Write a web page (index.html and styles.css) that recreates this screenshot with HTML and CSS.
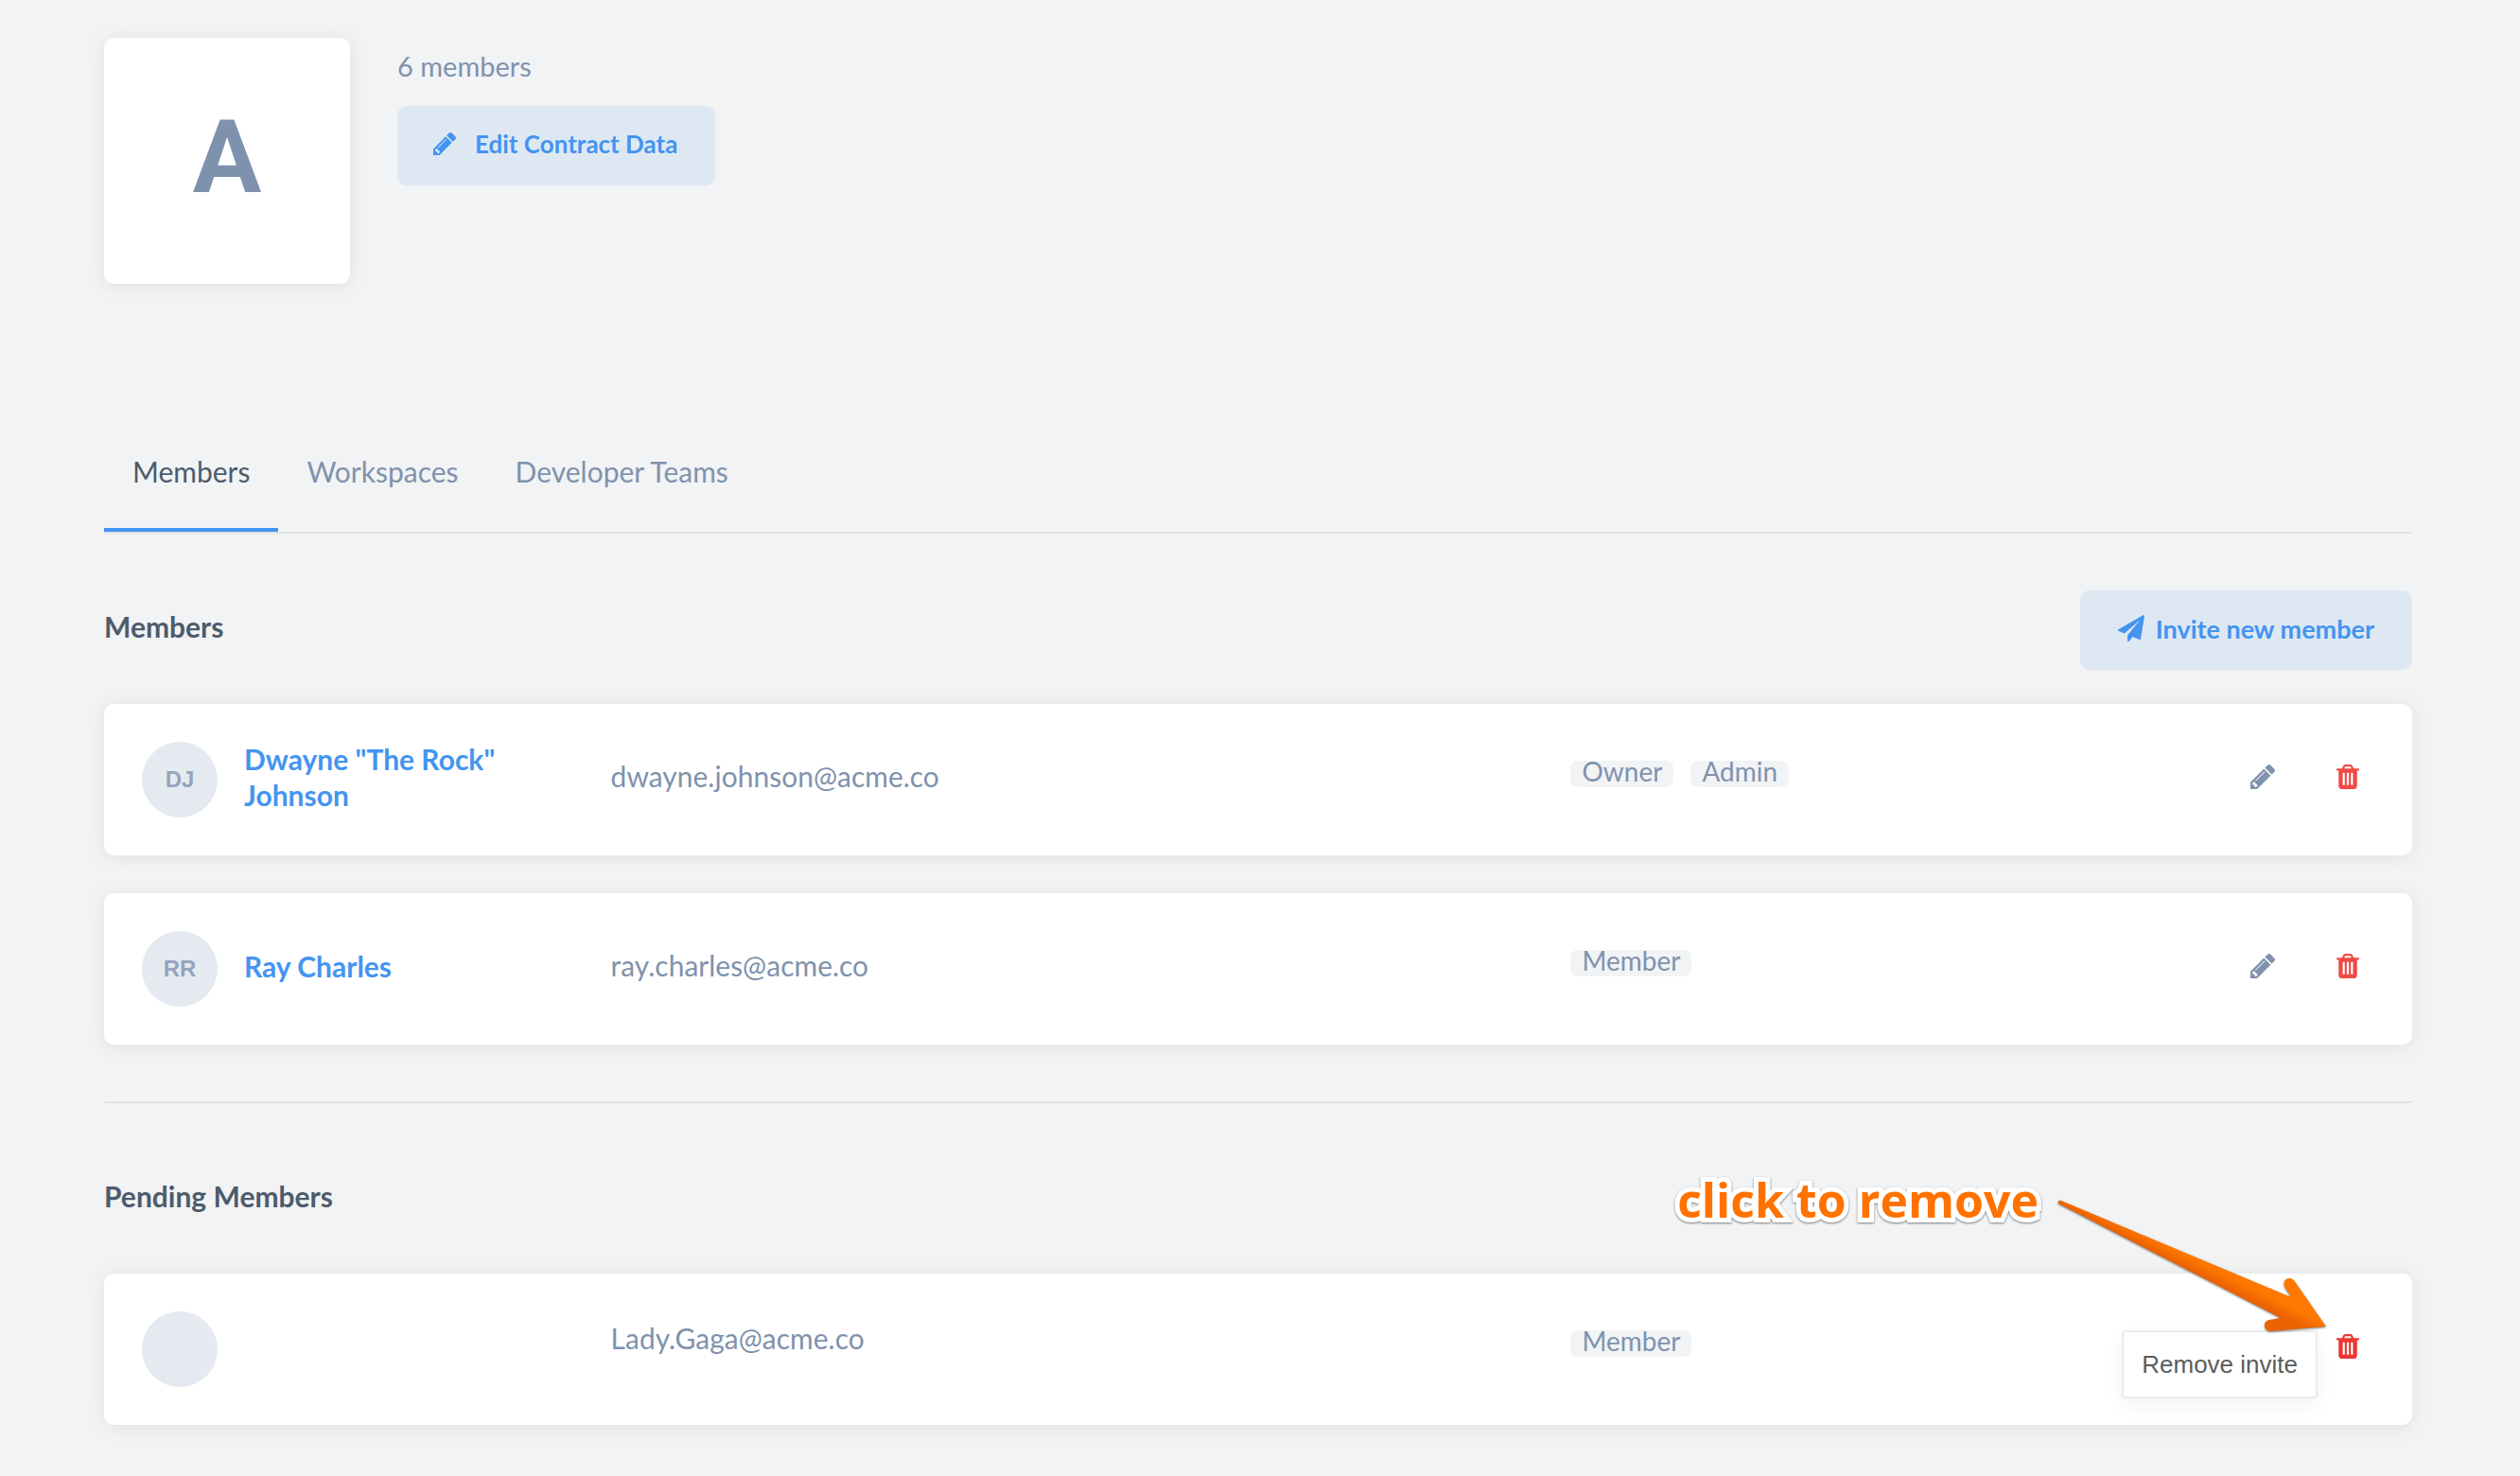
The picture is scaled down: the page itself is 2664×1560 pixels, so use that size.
FILE: index.html
```html
<!DOCTYPE html>
<html lang="en">
<head>
<meta charset="utf-8">
<meta name="viewport" content="width=device-width, initial-scale=1">
<title>Organization members</title>
<link rel="stylesheet" href="styles.css">
</head>
<body>
<svg class="sprite" aria-hidden="true">
  <symbol id="pencil" viewBox="128 149 1515 1515"><path d="M491 1536l91-91-235-235-91 91v107h128v128h107zm523-928q0-22-22-22-10 0-17 7l-542 542q-7 7-7 17 0 22 22 22 10 0 17-7l542-542q7-7 7-17zm-54-192l416 416-832 832h-416v-416zm683 96q0 53-37 90l-166 166-416-416 166-165q36-38 90-38 53 0 91 38l235 234q37 39 37 91z"/></symbol>
  <symbol id="plane" viewBox="0 0 1792 1792"><path d="M1764 11q33 24 27 64l-256 1536q-5 29-32 45-14 8-31 8-11 0-24-5l-453-185-242 295q-18 23-49 23-13 0-22-4-19-7-30.500-23.500t-11.500-36.500v-349l864-1059-1069 925-395-162q-37-14-40-55-2-40 32-59l1664-960q15-9 32-9 20 0 36 11z"/></symbol>
  <symbol id="trash" viewBox="192 128 1408 1536"><path d="M704 1376v-704q0-14-9-23t-23-9h-64q-14 0-23 9t-9 23v704q0 14 9 23t23 9h64q14 0 23-9t9-23zm256 0v-704q0-14-9-23t-23-9h-64q-14 0-23 9t-9 23v704q0 14 9 23t23 9h64q14 0 23-9t9-23zm256 0v-704q0-14-9-23t-23-9h-64q-14 0-23 9t-9 23v704q0 14 9 23t23 9h64q14 0 23-9t9-23zm-544-992h448l-48-117q-7-9-17-11h-317q-10 2-17 11zm928 32v64q0 14-9 23t-23 9h-96v948q0 83-47 143.500t-113 60.500h-832q-66 0-113-58.500t-47-141.500v-952h-96q-14 0-23-9t-9-23v-64q0-14 9-23t23-9h309l70-167q15-37 54-63t79-26h320q40 0 79 26t54 63l70 167h309q14 0 23 9t9 23z"/></symbol>
</svg>
<main class="page">
  <header class="org">
    <div class="org-logo">A</div>
    <div class="org-info">
      <p class="org-count">6 members</p>
      <button type="button" class="btn btn-edit"><svg class="icon-edit"><use href="#pencil"/></svg>Edit Contract Data</button>
    </div>
  </header>

  <nav class="tabs">
    <a href="#members" class="tab active" aria-current="page">Members</a>
    <a href="#workspaces" class="tab">Workspaces</a>
    <a href="#teams" class="tab">Developer Teams</a>
  </nav>

  <section class="members" id="members">
    <div class="section-head">
      <h2 class="heading">Members</h2>
      <button type="button" class="btn btn-invite"><svg class="icon-plane"><use href="#plane"/></svg>Invite new member</button>
    </div>
    <ul class="cards">
      <li class="card">
        <div class="person"><span class="avatar">DJ</span><a class="name" href="#dwayne">Dwayne "The Rock" Johnson</a></div>
        <div class="email">dwayne.johnson@acme.co</div>
        <div class="roles"><span class="badge">Owner</span><span class="badge">Admin</span></div>
        <div class="actions">
          <button type="button" class="action" aria-label="Edit member"><svg class="icon-pencil"><use href="#pencil"/></svg></button>
          <button type="button" class="action danger" aria-label="Remove member"><svg class="icon-trash"><use href="#trash"/></svg></button>
        </div>
      </li>
      <li class="card">
        <div class="person"><span class="avatar">RR</span><a class="name" href="#ray">Ray Charles</a></div>
        <div class="email">ray.charles@acme.co</div>
        <div class="roles"><span class="badge">Member</span></div>
        <div class="actions">
          <button type="button" class="action" aria-label="Edit member"><svg class="icon-pencil"><use href="#pencil"/></svg></button>
          <button type="button" class="action danger" aria-label="Remove member"><svg class="icon-trash"><use href="#trash"/></svg></button>
        </div>
      </li>
    </ul>
  </section>

  <section class="pending">
    <h2 class="heading">Pending Members</h2>
    <ul class="cards">
      <li class="card card-pending">
        <div class="person"><span class="avatar"></span></div>
        <div class="email">Lady.Gaga@acme.co</div>
        <div class="roles"><span class="badge">Member</span></div>
        <div class="actions">
          <button type="button" class="action danger hovered" aria-describedby="tip" aria-label="Remove invite"><svg class="icon-trash"><use href="#trash"/></svg></button>
        </div>
        <div class="tooltip" id="tip" role="tooltip">Remove invite</div>
        <p class="note">click to remove</p>
        <svg class="arrow" viewBox="0 0 300 150" aria-hidden="true">
          <defs><linearGradient id="shade" gradientUnits="userSpaceOnUse" x1="226" y1="92" x2="212" y2="120"><stop offset="0.350" stop-color="#ff7800"/><stop offset="0.750" stop-color="#eb6200"/></linearGradient></defs>
          <path fill="url(#shade)" d="M6 8Q5 4 9 5L252 107L245 96Q243 88 250 87Q254 87 257 92L289 138L230 143Q224 142 224 137Q224 132 229 131L241 129Z"/>
        </svg>
      </li>
    </ul>
  </section>
</main>
</body>
</html>
```
FILE: styles.css
```css
* { box-sizing: border-box; }

body {
  margin: 0;
  background: #f1f3f5;
  color: #7f92ad;
  font-family: Lato, "Noto Sans", sans-serif;
  font-size: 30px;
  line-height: 40px;
}

h2, p, ul { margin: 0; padding: 0; }
ul { list-style: none; }
a { text-decoration: none; }
button { border: 0; background: none; font-family: inherit; cursor: pointer; }
svg { fill: currentColor; flex: none; }

.sprite { position: absolute; width: 0; height: 0; }

.page { padding: 40px 114px 54px 110px; }

/* Organization header */
.org { display: flex; gap: 50px; }

.org-logo {
  width: 260px;
  height: 260px;
  padding-bottom: 8px;
  display: flex;
  align-items: center;
  justify-content: center;
  background: #fff;
  border-radius: 10px;
  box-shadow: 0 2px 20px rgba(0, 0, 20, 0.08);
  font-family: Roboto, sans-serif;
  font-weight: 700;
  font-size: 108px;
}

.org-info { display: flex; flex-direction: column; align-items: flex-start; gap: 22px; }
.org-count { padding-top: 10px; font-size: 29px; }

.btn {
  display: flex;
  align-items: center;
  height: 84px;
  padding: 0 40px 4px;
  border-radius: 10px;
  background: #dee8f3;
  color: #4494f0;
  font-size: 26px;
  font-weight: 700;
}

.btn-edit { gap: 20px; padding-left: 38px; }
.btn-invite { gap: 12px; font-size: 27px; }
.icon-edit { width: 24px; height: 24px; }
.icon-plane { width: 28px; height: 28px; }

/* Tabs */
.tabs { display: flex; margin-top: 138px; border-bottom: 2px solid #dfe1e4; }
.tab { padding: 40px 30px; border-bottom: 4px solid transparent; color: #7f92ad; }
.tab.active { color: #4d5b6b; border-color: #4494f0; }

/* Sections */
.members { padding: 60px 0; border-bottom: 2px solid #dfe1e4; }
.section-head { display: flex; justify-content: space-between; align-items: center; margin-bottom: 36px; }
.heading { font-size: 30px; font-weight: 700; color: #4d5b6b; }
.section-head .heading { padding-bottom: 8px; }
.pending { padding-top: 78px; }
.pending .heading { margin-bottom: 62px; }

/* Member cards */
.cards { display: flex; flex-direction: column; gap: 40px; }

.card {
  position: relative;
  display: grid;
  grid-template-columns: 21% 43% 1fr auto;
  align-items: center;
  min-height: 160px;
  padding: 0 40px;
  background: #fff;
  border-radius: 10px;
  box-shadow: 0 2px 20px rgba(0, 0, 20, 0.08);
}

.person { display: flex; align-items: center; gap: 28px; padding-right: 80px; }

.avatar {
  flex: none;
  width: 80px;
  height: 80px;
  border-radius: 50%;
  background: #e5eaf1;
  color: #95a5bb;
  font: 700 24px/80px "Liberation Sans", Arial, sans-serif;
  text-align: center;
}

.name { padding-bottom: 6px; color: #4494f0; font-weight: 700; line-height: 38px; }
.email { padding-bottom: 8px; }
.card-pending .email { padding-bottom: 24px; }

.roles { display: flex; gap: 18px; padding-bottom: 12px; }

.badge {
  padding: 0 12px 6px;
  border-radius: 8px;
  background: #f1f3f5;
  font-size: 28px;
  line-height: 22px;
}

.actions { display: flex; gap: 34px; padding-bottom: 6px; }

.action {
  display: flex;
  align-items: center;
  justify-content: center;
  width: 56px;
  height: 56px;
  padding: 0;
  color: #7f92ad;
}

.danger { color: #f04a44; }
.danger.hovered { color: #ee3632; }
.icon-pencil { width: 26px; height: 26px; }
.icon-trash { width: 24px; height: 26px; }

.tooltip {
  position: absolute;
  top: 60px;
  right: 100px;
  padding: 14px 19px;
  border: 2px solid #ebebeb;
  border-radius: 4px;
  background: #fff;
  box-shadow: 0 8px 20px rgba(0, 0, 0, 0.05);
  color: #5c5c5c;
  font-family: "Liberation Sans", Arial, sans-serif;
  font-size: 26px;
}

/* Callout pointing at the remove button */
.note {
  position: absolute;
  top: -108px;
  right: 395px;
  color: #ff7200;
  font-family: "Open Sans", "Noto Sans", sans-serif;
  font-weight: 700;
  font-size: 50px;
  line-height: 60px;
  white-space: nowrap;
  -webkit-text-stroke: 10px #fff;
  paint-order: stroke fill;
  stroke-linejoin: round;
  filter: drop-shadow(0 1px 1px rgba(0, 0, 0, 0.5));
}

.arrow {
  position: absolute;
  top: -82px;
  right: 80px;
  width: 300px;
  height: 150px;
  filter: drop-shadow(0 1px 1px rgba(0, 0, 0, 0.5));
}
```
